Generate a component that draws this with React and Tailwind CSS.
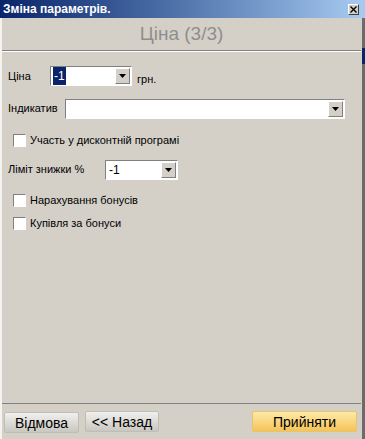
const font = { fontFamily: '"Liberation Sans", Arial, sans-serif' };

const Arrow = () => (
  <svg width="7" height="4" viewBox="0 0 7 4">
    <path d="M0 0h7L3.5 4z" fill="#000" />
  </svg>
);

const Combo = ({ width, value, selected }) => (
  <div
    className="flex h-[20px] items-stretch border border-t-[#808080] border-l-[#808080] border-b-white border-r-white bg-white"
    style={{ width }}
  >
    <div className="flex flex-1 items-center pl-[2px] text-[12px] text-black">
      {value && (
        <span className={selected ? "bg-[#0a246a] px-[1px] text-white" : "px-[1px]"}>{value}</span>
      )}
    </div>
    <div className="m-[1px] flex w-[15px] items-center justify-center border border-t-white border-l-white border-b-[#808080] border-r-[#808080] bg-[#d4d0c8]">
      <Arrow />
    </div>
  </div>
);

const Check = ({ label }) => (
  <div className="flex h-[13px] items-center gap-[4px] pl-[5px] text-[11px] leading-none text-black">
    <div className="h-[13px] w-[13px] border border-t-[#808080] border-l-[#808080] border-b-white border-r-white bg-white" />
    <span>{label}</span>
  </div>
);

const Btn = ({ children, width, gold }) => (
  <button
    className={
      "h-[21px] rounded-[2px] border text-[14px] text-black " +
      (gold
        ? "border-[#e6c470] bg-gradient-to-b from-[#fdeaa6] to-[#f4c355]"
        : "border-[#c0bdb5] bg-gradient-to-b from-[#f0f0ee] to-[#c9c7c0]")
    }
    style={{ width }}
  >
    {children}
  </button>
);

export default function App() {
  return (
    <div className="flex h-[439px] w-[365px] overflow-hidden bg-[#d4d0c8]" style={font}>
      <div className="flex w-[362px] flex-col">
        <div className="flex h-[18px] items-center justify-between bg-gradient-to-r from-[#0a246a] to-[#a6caf0] pl-[3px] pr-[3px]">
          <span className="text-[12px] font-bold text-white">Зміна параметрів.</span>
          <div className="flex h-[11px] w-[11px] items-center justify-center border border-t-white border-l-white border-b-[#404040] border-r-[#404040] bg-[#d4d0c8]">
            <svg width="7" height="7" viewBox="0 0 7 7">
              <path d="M0.5 0.5l6 6M6.5 0.5l-6 6" stroke="#000" strokeWidth="1.4" />
            </svg>
          </div>
        </div>
        <div className="flex flex-1 flex-col border-l-2 border-l-[#f4f3ef] pr-[1px]">
          <div className="flex h-[33px] items-center justify-center border-b border-[#808080] text-[19px] text-[#8e8e8e]">
            Ціна (3/3)
          </div>
          <div className="flex h-[353px] flex-col border-t border-t-white border-b border-b-[#808080] pl-[6px] pt-[13px]">
            <div className="flex items-center">
              <span className="w-[42px] text-[11px] text-black">Ціна</span>
              <Combo width={82} value="-1" selected />
              <span className="ml-[5px] mt-[6px] text-[11px] text-black">грн.</span>
            </div>
            <div className="mt-[11px] flex items-center">
              <span className="w-[57px] text-[11px] text-black">Індикатив</span>
              <Combo width={280} />
            </div>
            <div className="mt-[15px]">
              <Check label="Участь у дисконтній програмі" />
            </div>
            <div className="mt-[13px] flex items-center">
              <span className="w-[97px] text-[11px] text-black">Ліміт знижки %</span>
              <Combo width={73} value="-1" />
            </div>
            <div className="mt-[14px]">
              <Check label="Нарахування бонусів" />
            </div>
            <div className="mt-[10px]">
              <Check label="Купівля за бонуси" />
            </div>
          </div>
          <div className="flex items-center pl-[2px] pt-[6px]">
            <Btn width={75}>Відмова</Btn>
            <div className="ml-[6px]">
              <Btn width={74}>&lt;&lt; Назад</Btn>
            </div>
            <div className="ml-auto mr-[4px]">
              <Btn width={105} gold>Прийняти</Btn>
            </div>
          </div>
        </div>
      </div>
      <div className="flex w-[3px] flex-col bg-[#6b6b6b]">
        <div className="h-[18px] bg-[#a6caf0]" />
        <div className="mt-[30px] h-[16px] bg-[#0a246a]" />
      </div>
    </div>
  );
}
